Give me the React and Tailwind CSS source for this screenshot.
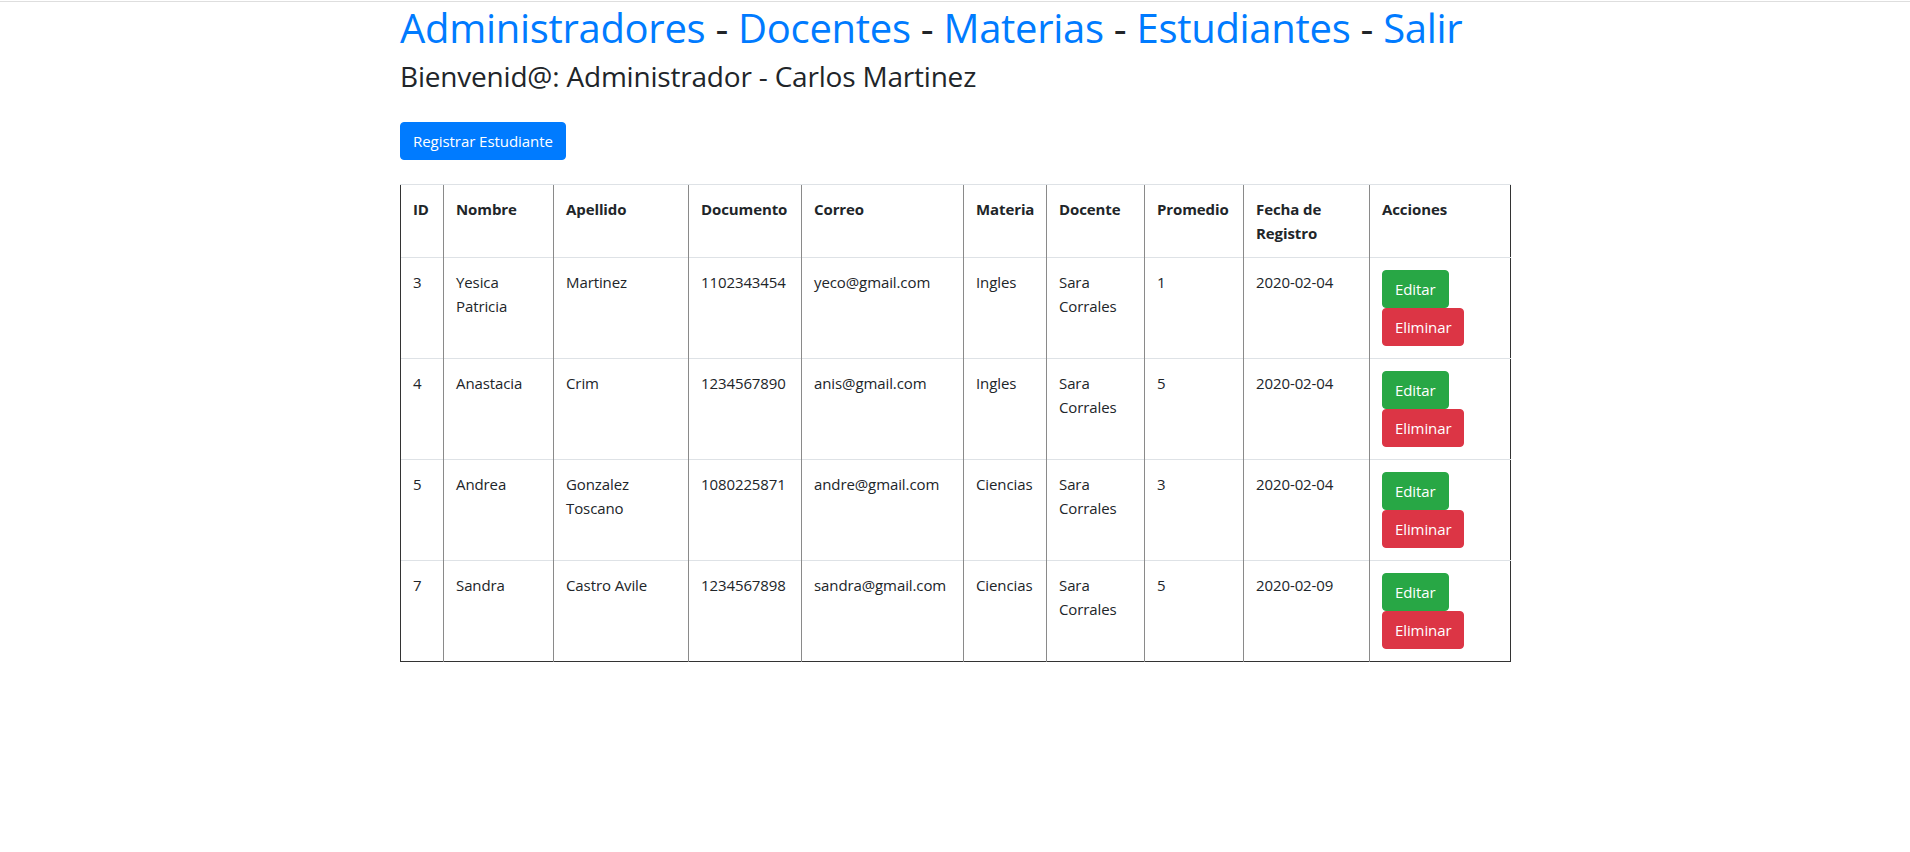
import React from "react";

const rows = [
  ["3", ["Yesica", "Patricia"], ["Martinez"], "1102343454", "yeco@gmail.com", "Ingles", ["Sara", "Corrales"], "1", "2020-02-04"],
  ["4", ["Anastacia"], ["Crim"], "1234567890", "anis@gmail.com", "Ingles", ["Sara", "Corrales"], "5", "2020-02-04"],
  ["5", ["Andrea"], ["Gonzalez", "Toscano"], "1080225871", "andre@gmail.com", "Ciencias", ["Sara", "Corrales"], "3", "2020-02-04"],
  ["7", ["Sandra"], ["Castro Avile"], "1234567898", "sandra@gmail.com", "Ciencias", ["Sara", "Corrales"], "5", "2020-02-09"],
];

const widths = [43, 110, 135, 113, 162, 83, 98, 99, 126, 141];

function Lines({ v }) {
  if (Array.isArray(v)) {
    return v.map((t, i) => (
      <div key={i} className="whitespace-nowrap">
        {t}
      </div>
    ));
  }
  return <div className="whitespace-nowrap">{v}</div>;
}

const cell = "p-3 align-top text-left border-t border-t-[#dee2e6] border-l border-l-[#8a8a8a] first:border-l-[#333]";

export default function App() {
  return (
    <div className="relative min-h-screen bg-white text-[#212529] font-['Open_Sans',sans-serif]">
      <div className="absolute top-px left-0 right-0 h-px bg-[#dedede]" />
      <div className="mx-auto w-[1140px] px-[15px]">
        <h1 className="pt-0.5 text-[40px] leading-[52px] mb-[5px] font-normal tracking-[-0.3px]">
          <a className="text-[#007bff]">Administradores</a> - <a className="text-[#007bff]">Docentes</a> -{" "}
          <a className="text-[#007bff]">Materias</a> - <a className="text-[#007bff]">Estudiantes</a> -{" "}
          <a className="text-[#007bff]">Salir</a>
        </h1>
        <h3 className="text-[28px] leading-[34px] mb-2 font-medium tracking-[-0.2px]">
          Bienvenid@: Administrador - Carlos Martinez
        </h3>
        <div className="h-[21px]" />
        <button className="bg-[#007bff] border border-[#007bff] text-white text-[15px] leading-6 px-3 py-1.5 rounded tracking-[-0.05px]">
          Registrar Estudiante
        </button>
        <div className="h-6" />
        <table className="w-[1110px] table-fixed border-collapse border-b border-r border-b-[#333] border-r-[#333] text-[15px] leading-6 tracking-[-0.1px]">
          <colgroup>
            {widths.map((w, i) => (
              <col key={i} style={{ width: w }} />
            ))}
          </colgroup>
          <tbody>
            <tr>
              {["ID", "Nombre", "Apellido", "Documento", "Correo", "Materia", "Docente", "Promedio", ["Fecha de", "Registro"], "Acciones"].map(
                (h, i) => (
                  <th key={i} className={cell + " font-bold"}>
                    <Lines v={h} />
                  </th>
                )
              )}
            </tr>
            {rows.map((r, ri) => (
              <tr key={ri}>
                {r.map((c, ci) => (
                  <td key={ci} className={cell}>
                    <Lines v={c} />
                  </td>
                ))}
                <td className={cell}>
                  <div className="flex flex-col items-start">
                    <button className="bg-[#28a745] border border-[#28a745] text-white px-3 py-1.5 leading-6 rounded">
                      Editar
                    </button>
                    <button className="bg-[#dc3545] border border-[#dc3545] text-white px-3 py-1.5 leading-6 rounded">
                      Eliminar
                    </button>
                  </div>
                </td>
              </tr>
            ))}
          </tbody>
        </table>
      </div>
    </div>
  );
}
